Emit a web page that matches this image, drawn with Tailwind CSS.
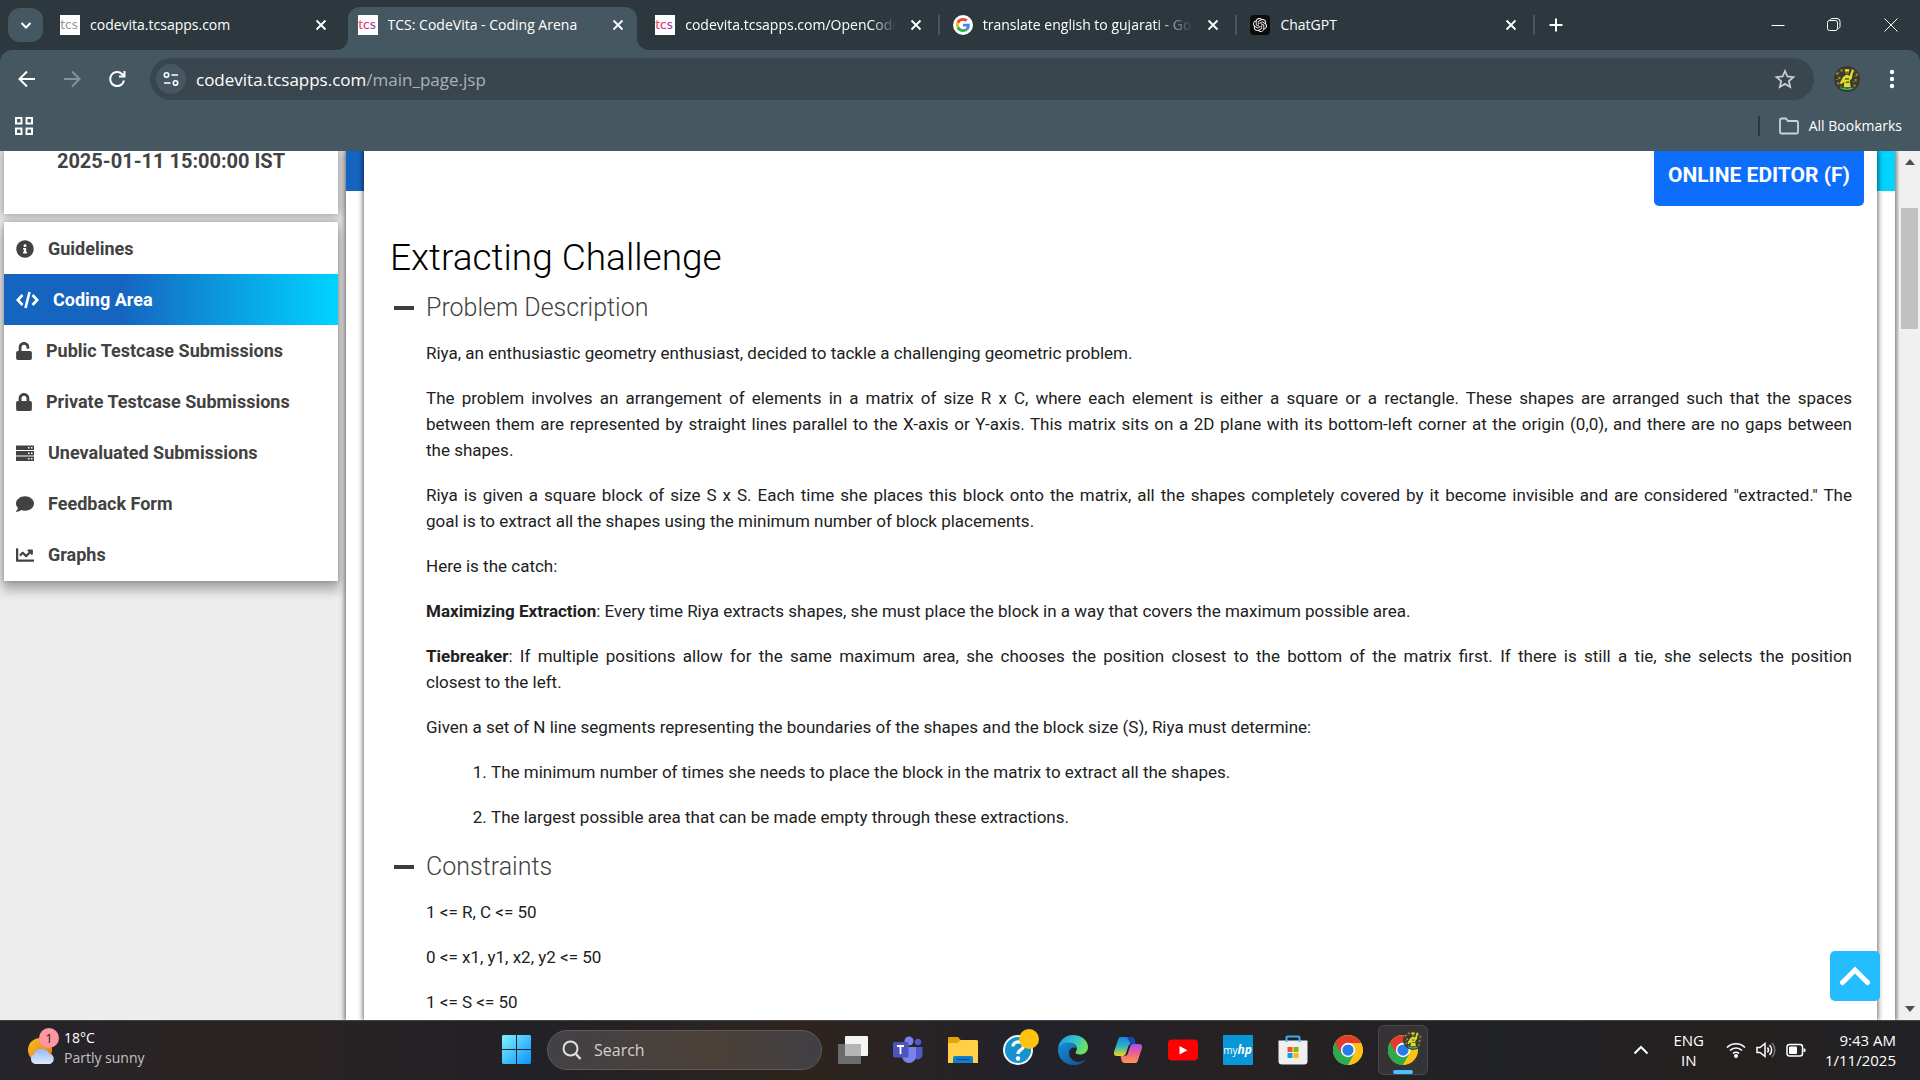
<!DOCTYPE html>
<html lang="en">
<head>
<meta charset="utf-8">
<title>TCS: CodeVita - Coding Arena</title>
<script src="https://cdn.jsdelivr.net/npm/@tailwindcss/browser@4"></script>
</head>
<body class="flex h-screen flex-col overflow-hidden bg-white font-['Roboto',sans-serif] text-[#212121]">
<svg class="absolute h-0 w-0" aria-hidden="true">
  <defs>
    <symbol id="x" viewBox="0 0 20 20"><path d="M5.500 5.500l9 9M14.500 5.500l-9 9" stroke="currentColor" stroke-width="1.800" fill="none"/></symbol>
    <linearGradient id="tcsg" x1="0" y1="0" x2="1" y2="1"><stop offset="0" stop-color="#f59a23"/><stop offset=".5" stop-color="#e0287d"/><stop offset="1" stop-color="#5b3fc4"/></linearGradient>
    <symbol id="chrome" viewBox="0 0 48 48">
      <circle cx="24" cy="24" r="24" fill="#fbc116"/>
      <path d="M24 24L3.200 12A24 24 0 0 0 24 48L34.400 30z" fill="#2da94f"/>
      <path d="M24 13H44.800A24 24 0 0 0 3.200 12L13.600 30z" fill="#e33b2e"/>
      <path d="M24 48A24 24 0 0 0 44.800 13H24L34.400 30z" fill="#fbc116"/>
      <circle cx="24" cy="24" r="11.500" fill="#fff"/><circle cx="24" cy="24" r="9" fill="#2a7bea"/>
    </symbol>
    <symbol id="fan" viewBox="0 0 24 24">
      <circle cx="12" cy="12" r="12" fill="#3a3a2a"/>
      <path d="M2 6h2v2H2zM6 3h2v2H6zM4 10h2v2H4zM17 4h2v2h-2zM20 7h2v2h-2zM19 12h2v2h-2zM3 15h2v2H3zM18 17h2v2h-2z" fill="#a3845a"/>
      <path d="M4 5h1v2H4zM19 9h2v1h-2zM2 12h2v1H2zM17 14h2v1h-2zM6 18h1v2H6z" fill="#5f8a3c"/>
      <path d="M8.500 10l3-2 3 1 2-6 1.500.5-1.500 8-2 2 1 6H9l.5-5-3 2.500-1-1.500z" fill="#e2dc2c"/>
      <circle cx="12" cy="6" r="2" fill="#7b6a35"/><path d="M10 3h4v2h-4z" fill="#f2e530"/>
      <path d="M10 12h4M11 15h3" stroke="#3e6b2b" stroke-width="1.200"/>
      <path d="M5 20h5l2 1 3-1h4a12 12 0 0 1-14 0z" fill="#2fb979"/>
    </symbol>
  </defs>
</svg>

<header class="shrink-0 bg-[#2d383e] font-['Open_Sans',sans-serif] text-white">
  <div class="flex h-[50px] items-stretch">
    <button aria-label="Search tabs" class="mt-2 ml-2 flex h-[34px] w-[35px] items-center justify-center rounded-xl bg-[#455760]">
      <svg class="h-3 w-3" viewBox="0 0 12 12" fill="none" stroke="currentColor" stroke-width="2"><path d="M1.500 4L6 8.500 10.500 4"/></svg>
    </button>
    <div role="tablist" class="ml-[7px] grid w-[1488px] grid-cols-5 text-sm">
      <div role="tab" class="relative flex items-center pr-[17px] pl-2.5">
        <svg class="h-5 w-5 shrink-0 bg-white" viewBox="0 0 20 20"><text x="0" y="14" font-family="Lato" font-size="14" fill="#999">tcs</text></svg>
        <span class="ml-2.5 w-0 flex-1 overflow-hidden whitespace-nowrap">codevita.tcsapps.com</span>
        <button aria-label="Close tab" class="ml-2.5 h-5 w-5"><svg class="h-5 w-5"><use href="#x"/></svg></button>
      </div>
      <div role="tab" aria-selected="true" class="relative pt-[7px] pr-2">
        <svg class="absolute bottom-0 -left-3 h-3 w-3" viewBox="0 0 12 12"><path d="M12 0v12H0A12 12 0 0 0 12 0z" fill="#455760"/></svg>
        <svg class="absolute -right-1 bottom-0 h-3 w-3" viewBox="0 0 12 12"><path d="M0 0v12h12A12 12 0 0 1 0 0z" fill="#455760"/></svg>
        <div class="flex h-full items-center rounded-t-xl bg-[#455760] pr-[9px] pb-[7px] pl-2.5">
          <svg class="h-5 w-5 shrink-0 bg-white" viewBox="0 0 20 20"><text x="0" y="14" font-family="Lato" font-size="14" fill="url(#tcsg)">tcs</text></svg>
          <span class="ml-2.5 w-0 flex-1 overflow-hidden whitespace-nowrap">TCS: CodeVita - Coding Arena</span>
          <button aria-label="Close tab" class="ml-2.5 h-5 w-5"><svg class="h-5 w-5"><use href="#x"/></svg></button>
        </div>
      </div>
      <div role="tab" class="relative flex items-center pr-[17px] pl-2.5">
        <svg class="h-5 w-5 shrink-0 bg-white" viewBox="0 0 20 20"><text x="0" y="14" font-family="Lato" font-size="14" fill="url(#tcsg)">tcs</text></svg>
        <span class="ml-2.5 w-0 flex-1 overflow-hidden whitespace-nowrap [mask-image:linear-gradient(to_right,#000_88%,transparent)]">codevita.tcsapps.com/OpenCodeEditor</span>
        <button aria-label="Close tab" class="ml-2.5 h-5 w-5"><svg class="h-5 w-5"><use href="#x"/></svg></button>
        <span class="absolute top-[15px] right-[3px] h-5 w-0.5 bg-[#455760]"></span>
      </div>
      <div role="tab" class="relative flex items-center pr-[17px] pl-2.5">
        <svg class="h-5 w-5 shrink-0" viewBox="0 0 68 68"><circle cx="34" cy="34" r="34" fill="#fff"/><g transform="translate(10 10)"><path fill="#EA4335" d="M24 9.500c3.540 0 6.710 1.220 9.210 3.600l6.850-6.850C35.900 2.380 30.470 0 24 0 14.620 0 6.510 5.380 2.560 13.220l7.980 6.190C12.430 13.720 17.740 9.500 24 9.500z"/><path fill="#4285F4" d="M46.980 24.550c0-1.570-.15-3.090-.38-4.550H24v9.020h12.940c-.58 2.960-2.260 5.480-4.780 7.180l7.730 6c4.510-4.180 7.090-10.360 7.090-17.650z"/><path fill="#FBBC05" d="M10.530 28.590c-.48-1.450-.76-2.990-.76-4.590s.27-3.140.76-4.590l-7.980-6.190C.92 16.460 0 20.120 0 24c0 3.880.92 7.540 2.560 10.780l7.970-6.190z"/><path fill="#34A853" d="M24 48c6.480 0 11.930-2.130 15.890-5.810l-7.730-6c-2.150 1.450-4.920 2.300-8.160 2.300-6.260 0-11.570-4.220-13.470-9.910l-7.980 6.190C6.510 42.620 14.620 48 24 48z"/></g></svg>
        <span class="ml-2.5 w-0 flex-1 overflow-hidden whitespace-nowrap [mask-image:linear-gradient(to_right,#000_82%,transparent)]">translate english to gujarati - Google Search</span>
        <button aria-label="Close tab" class="ml-2.5 h-5 w-5"><svg class="h-5 w-5"><use href="#x"/></svg></button>
        <span class="absolute top-[15px] right-[3px] h-5 w-0.5 bg-[#455760]"></span>
      </div>
      <div role="tab" class="relative flex items-center pr-[17px] pl-2.5">
        <svg class="h-5 w-5 shrink-0 rounded-sm bg-[#0b0b0b] p-[3px]" viewBox="0 0 24 24" fill="#fff"><path d="M22.2819 9.8211a5.9847 5.9847 0 0 0-.5157-4.9108 6.0462 6.0462 0 0 0-6.5098-2.9A6.0651 6.0651 0 0 0 4.9807 4.1818a5.9847 5.9847 0 0 0-3.9977 2.9 6.0462 6.0462 0 0 0 .7427 7.0966 5.98 5.98 0 0 0 .511 4.9107 6.051 6.051 0 0 0 6.5146 2.9001A5.9847 5.9847 0 0 0 13.2599 24a6.0557 6.0557 0 0 0 5.7718-4.2058 5.9894 5.9894 0 0 0 3.9977-2.9001 6.0557 6.0557 0 0 0-.7475-7.0729zm-9.022 12.6081a4.4755 4.4755 0 0 1-2.8764-1.0408l.1419-.0804 4.7783-2.7582a.7948.7948 0 0 0 .3927-.6813v-6.7369l2.02 1.1686a.071.071 0 0 1 .038.052v5.5826a4.504 4.504 0 0 1-4.4945 4.4944zm-9.6607-4.1254a4.4708 4.4708 0 0 1-.5346-3.0137l.142.0852 4.783 2.7582a.7712.7712 0 0 0 .7806 0l5.8428-3.3685v2.3324a.0804.0804 0 0 1-.0332.0615L9.74 19.9502a4.4992 4.4992 0 0 1-6.1408-1.6464zM2.3408 7.8956a4.485 4.485 0 0 1 2.3655-1.9728V11.6a.7664.7664 0 0 0 .3879.6765l5.8144 3.3543-2.0201 1.1685a.0757.0757 0 0 1-.071 0l-4.8303-2.7865A4.504 4.504 0 0 1 2.3408 7.872zm16.5963 3.8558L13.1038 8.364 15.1192 7.2a.0757.0757 0 0 1 .071 0l4.8303 2.7913a4.4944 4.4944 0 0 1-.6765 8.1042v-5.6772a.79.79 0 0 0-.407-.667zm2.0107-3.0231l-.142-.0852-4.7735-2.7818a.7759.7759 0 0 0-.7854 0L9.409 9.2297V6.8974a.0662.0662 0 0 1 .0284-.0615l4.8303-2.7866a4.4992 4.4992 0 0 1 6.6802 4.66zM8.3065 12.863l-2.02-1.1638a.0804.0804 0 0 1-.038-.0567V6.0742a4.4992 4.4992 0 0 1 7.3757-3.4537l-.142.0805L8.704 5.459a.7948.7948 0 0 0-.3927.6813zm1.0976-2.3654l2.602-1.4998 2.6069 1.4998v2.9994l-2.5974 1.4997-2.6067-1.4997Z"/></svg>
        <span class="ml-2.5 w-0 flex-1 overflow-hidden whitespace-nowrap">ChatGPT</span>
        <button aria-label="Close tab" class="ml-2.5 h-5 w-5"><svg class="h-5 w-5"><use href="#x"/></svg></button>
        <span class="absolute top-[15px] right-[3px] h-5 w-0.5 bg-[#455760]"></span>
      </div>
    </div>
    <button aria-label="New tab" class="ml-1.5 self-center"><svg class="h-6 w-6" viewBox="0 0 24 24" stroke="currentColor" stroke-width="2"><path d="M5.500 12h13M12 5.500v13"/></svg></button>
    <div class="ml-auto flex items-center">
      <button aria-label="Minimize" class="flex w-14 justify-center"><svg class="h-4 w-4" viewBox="0 0 16 16" stroke="currentColor"><path d="M1.500 8.500h13"/></svg></button>
      <button aria-label="Restore" class="flex w-14 justify-center"><svg class="h-4 w-4" viewBox="0 0 16 16" fill="none" stroke="currentColor"><rect x="1.500" y="3.500" width="10" height="10" rx="2"/><path d="M4 3.500C4 2 5 1.500 6 1.500h5a3 3 0 0 1 3 3v5c0 1-1 2-2 2"/></svg></button>
      <button aria-label="Close window" class="flex w-[58px] justify-center"><svg class="h-4 w-4" viewBox="0 0 16 16" stroke="currentColor"><path d="M1.500 1.500l13 13M14.500 1.500l-13 13"/></svg></button>
    </div>
  </div>

  <div class="rounded-t-xl bg-[#455760]">
    <div class="flex h-[58px] items-center pr-4 pl-[15px]">
      <button aria-label="Back"><svg class="h-6 w-6" viewBox="0 0 24 24" fill="none" stroke="currentColor" stroke-width="2"><path d="M20 12H5M12 4.500L4.500 12l7.500 7.500"/></svg></button>
      <button aria-label="Forward" class="ml-[21px] text-[#84929a]"><svg class="h-6 w-6" viewBox="0 0 24 24" fill="none" stroke="currentColor" stroke-width="2"><path d="M4 12h15M12 4.500l7.500 7.500-7.500 7.500"/></svg></button>
      <button aria-label="Reload" class="ml-[21px]"><svg class="h-6 w-6" viewBox="0 0 24 24" fill="none" stroke="currentColor" stroke-width="2"><path d="M19 13.500A7 7 0 1 1 17 7l2.500 2.500M19.500 4v5.500H14"/></svg></button>
      <div class="ml-[21px] flex h-[42px] flex-1 items-center rounded-full bg-[#3a464d] pr-[17px] pl-1.5">
        <button aria-label="Site information" class="flex h-[30px] w-[30px] items-center justify-center rounded-full bg-[#455760]"><svg class="h-4 w-4" viewBox="0 0 16 16" fill="none" stroke="currentColor" stroke-width="1.600"><circle cx="3.500" cy="4" r="2.200"/><path d="M8.500 4H15M1 12h6.500"/><circle cx="12.500" cy="12" r="2.200"/></svg></button>
        <a href="#" class="ml-2.5 flex-1 pt-0.5 text-[17px] leading-6">codevita.tcsapps.com<span class="text-[#aab2b6]">/main_page.jsp</span></a>
        <button aria-label="Bookmark this page" class="text-[#c8cdd0]"><svg class="h-6 w-6" viewBox="0 0 24 24" fill="none" stroke="currentColor" stroke-width="1.800"><path d="M12 4l2.400 5.500 6 .6-4.500 4 1.300 5.900-5.200-3.100L6.800 20l1.300-5.900-4.500-4 6-.6z"/></svg></button>
      </div>
      <button aria-label="Profile" class="ml-5"><svg class="h-[26px] w-[26px]"><use href="#fan"/></svg></button>
      <button aria-label="Chrome menu" class="ml-5"><svg class="h-6 w-6" viewBox="0 0 24 24" fill="currentColor"><circle cx="12" cy="5" r="2.200"/><circle cx="12" cy="12" r="2.200"/><circle cx="12" cy="19" r="2.200"/></svg></button>
    </div>
    <div class="flex h-[43px] items-center pr-[18px] pb-2 pl-[15px]">
      <button aria-label="Apps"><svg class="h-[18px] w-[18px]" viewBox="0 0 18 18" fill="none" stroke="currentColor" stroke-width="2"><path d="M1 1h5.500v5.500H1zM11.500 1H17v5.500h-5.500zM1 11.500h5.500V17H1zM11.500 11.500H17V17h-5.500z"/></svg></button>
      <span class="ml-auto h-5 w-0.5 bg-[#2d383e]"></span>
      <button class="ml-[19px] flex items-center gap-2.5 text-sm"><svg class="h-5 w-5" viewBox="0 0 20 20" fill="none" stroke="#cdd2d5" stroke-width="1.800"><path d="M1 4a1.500 1.500 0 0 1 1.500-1.500H7l2 2.500h8.500A1.500 1.500 0 0 1 19 6.500V16a1.500 1.500 0 0 1-1.500 1.500h-15A1.500 1.500 0 0 1 1 16z"/></svg>All Bookmarks</button>
    </div>
  </div>
</header>

<div class="relative flex min-h-0 flex-1 overflow-hidden bg-[#ededed]">
  <aside class="w-[346px] shrink-0 pr-2 pl-1 text-[#424242]">
    <section class="flex h-[63px] justify-center bg-white text-xl leading-5 font-bold shadow-[0_0_10px_2px_rgba(0,0,0,0.35)]">2025-01-11 15:00:00 IST</section>
    <nav class="mt-2 bg-white py-px text-lg font-bold shadow-[0_8px_10px_2px_rgba(0,0,0,0.25),0_0_6px_rgba(0,0,0,0.3)]">
      <a href="#" class="flex h-[51px] items-center gap-3.5 pl-3"><svg class="h-[18px] w-[18px]" viewBox="0 0 512 512" fill="currentColor"><path d="M256 8C119.043 8 8 119.083 8 256c0 136.997 111.043 248 248 248s248-111.003 248-248C504 119.083 392.957 8 256 8zm0 110c23.196 0 42 18.804 42 42s-18.804 42-42 42-42-18.804-42-42 18.804-42 42-42zm56 254c0 6.627-5.373 12-12 12h-88c-6.627 0-12-5.373-12-12v-24c0-6.627 5.373-12 12-12h12v-64h-12c-6.627 0-12-5.373-12-12v-24c0-6.627 5.373-12 12-12h64c6.627 0 12 5.373 12 12v100h12c6.627 0 12 5.373 12 12v24z"/></svg>Guidelines</a>
      <a href="#" class="flex h-[51px] items-center gap-3.5 bg-[linear-gradient(to_right,#1565c0_35%,#00d4ff)] pl-3 text-white"><svg class="h-[18px] w-[23px]" viewBox="0 0 23 18" fill="none" stroke="currentColor" stroke-width="2.600"><path d="M6.500 4L1.800 9l4.700 5M16.500 4l4.700 5-4.700 5M13.500 1l-4 16"/></svg>Coding Area</a>
      <a href="#" class="flex h-[51px] items-center gap-3.5 pl-3"><svg class="h-[18px] w-4" viewBox="0 0 448 512" fill="currentColor"><path d="M400 256H152V152.900c0-39.600 31.700-72.500 71.300-72.900 40-.4 72.700 32.100 72.700 72v16c0 13.300 10.700 24 24 24h32c13.300 0 24-10.700 24-24v-16C376 68 307.500-.3 223.500 0 139.500.3 72 69.500 72 153.500V256H48c-26.500 0-48 21.500-48 48v160c0 26.500 21.500 48 48 48h352c26.500 0 48-21.500 48-48V304c0-26.500-21.500-48-48-48z"/></svg>Public Testcase Submissions</a>
      <a href="#" class="flex h-[51px] items-center gap-3.5 pl-3"><svg class="h-[18px] w-4" viewBox="0 0 448 512" fill="currentColor"><path d="M400 224h-24v-72C376 68.200 307.800 0 224 0S72 68.200 72 152v72H48c-26.500 0-48 21.500-48 48v192c0 26.500 21.500 48 48 48h352c26.500 0 48-21.500 48-48V272c0-26.500-21.500-48-48-48zm-104 0H152v-72c0-39.700 32.300-72 72-72s72 32.300 72 72v72z"/></svg>Private Testcase Submissions</a>
      <a href="#" class="flex h-[51px] items-center gap-3.5 pl-3"><svg class="h-[18px] w-[18px]" viewBox="0 0 18 18"><path d="M0 1.500h18v4.500H0zM0 7h18v4.500H0zM0 12.500h18V17H0z" fill="currentColor"/><path d="M12 3h1.500v1.500H12zM15 3h1.500v1.500H15zM12 8.500h1.500V10H12zM15 8.500h1.500V10H15zM12 14h1.500v1.500H12zM15 14h1.500v1.500H15z" fill="#fff"/></svg>Unevaluated Submissions</a>
      <a href="#" class="flex h-[51px] items-center gap-3.5 pl-3"><svg class="h-[18px] w-[18px]" viewBox="0 0 512 512" fill="currentColor"><path d="M256 32C114.600 32 0 125.100 0 240c0 49.600 21.400 95 57 130.700C44.500 421.100 2.700 466 2.200 466.500c-2.200 2.300-2.800 5.700-1.500 8.700S4.800 480 8 480c66.300 0 116-31.800 140.600-51.400 32.700 12.300 69 19.400 107.400 19.400 141.400 0 256-93.100 256-208S397.400 32 256 32z"/></svg>Feedback Form</a>
      <a href="#" class="flex h-[51px] items-center gap-3.5 pl-3"><svg class="h-[18px] w-[18px]" viewBox="0 0 512 512" fill="currentColor"><path d="M496 384H64V80c0-8.840-7.160-16-16-16H16C7.160 64 0 71.160 0 80v336c0 17.670 14.330 32 32 32h464c8.840 0 16-7.160 16-16v-32c0-8.840-7.160-16-16-16zM464 96H345.940c-21.380 0-32.090 25.850-16.970 40.970l32.400 32.400L288 242.750l-73.370-73.370c-12.500-12.500-32.760-12.500-45.250 0l-68.690 68.690c-6.250 6.250-6.250 16.380 0 22.630l22.620 22.620c6.250 6.250 16.380 6.250 22.630 0L192 237.250l73.370 73.370c12.500 12.500 32.760 12.500 45.250 0l96-96 32.400 32.400c15.120 15.120 40.970 4.410 40.970-16.970V112c.01-8.840-7.150-16-15.990-16z"/></svg>Graphs</a>
    </nav>
  </aside>

  <main class="min-w-0 flex-1 bg-white bg-[linear-gradient(to_right,#1565c0_35%,#00d4ff)] bg-[length:100%_40px] bg-no-repeat px-[18px] shadow-[0_0_5px_1px_rgba(0,0,0,0.6)]">
    <article class="h-full overflow-hidden bg-white pr-[25px] pl-[26px] shadow-[0_0_5px_1px_rgba(0,0,0,0.6)]">
      <div class="-mr-3 flex justify-end"><button class="h-[55px] rounded-b-[5px] bg-[#0d6efd] px-3.5 pb-1.5 text-[21px] font-bold text-white">ONLINE EDITOR (F)</button></div>
      <h1 class="mt-7 text-[37px] leading-12 font-light text-black">Extracting Challenge</h1>
      <h2 class="mt-2 flex items-center gap-3 pl-1 text-[25px] leading-9 font-light text-[#424242]"><span class="h-1 w-5 bg-[#3d3d3d]"></span>Problem Description</h2>
      <div class="mt-3.5 space-y-[19px] pl-9 text-justify text-[17px] leading-[26px]">
        <p>Riya, an enthusiastic geometry enthusiast, decided to tackle a challenging geometric problem.</p>
        <p>The problem involves an arrangement of elements in a matrix of size R x C, where each element is either a square or a rectangle. These shapes are arranged such that the spaces between&nbsp;them are represented by straight lines parallel to the X-axis or Y-axis. This matrix sits on a 2D plane with its bottom-left corner at the origin (0,0), and there are no gaps between the&nbsp;shapes.</p>
        <p>Riya is given a square block of size S x S. Each time she places this block onto the matrix, all the shapes completely covered by it become invisible and are considered "extracted." The goal&nbsp;is&nbsp;to extract all the shapes using the minimum number of block placements.</p>
        <p>Here is the catch:</p>
        <p><b>Maximizing Extraction</b>: Every time Riya extracts shapes, she must place the block in a way that covers the maximum possible area.</p>
        <p><b>Tiebreaker</b>: If multiple positions allow for the same maximum area, she chooses the position closest to the bottom of the matrix first. If there is still a tie, she selects the position closest&nbsp;to&nbsp;the left.</p>
        <p>Given a set of N line segments representing the boundaries of the shapes and the block size (S), Riya must determine:</p>
        <ol class="list-decimal space-y-[19px] pl-[65px]">
          <li>The minimum number of times she needs to place the block in the matrix to extract all the shapes.</li>
          <li>The largest possible area that can be made empty through these extractions.</li>
        </ol>
      </div>
      <h2 class="mt-[19px] flex items-center gap-3 pl-1 text-[25px] leading-9 font-light text-[#424242]"><span class="h-1 w-5 bg-[#3d3d3d]"></span>Constraints</h2>
      <div class="mt-3.5 space-y-[19px] pl-9 text-[17px] leading-[26px]">
        <p>1 &lt;= R, C &lt;= 50</p>
        <p>0 &lt;= x1, y1, x2, y2 &lt;= 50</p>
        <p>1 &lt;= S &lt;= 50</p>
      </div>
    </article>
  </main>

  <div class="ml-1 flex w-[21px] shrink-0 flex-col items-center bg-[#f0f0f0] py-2">
    <svg class="h-1.5 w-2.5" viewBox="0 0 10 6"><path d="M5 0l5 6H0z" fill="#505050"/></svg>
    <div class="mt-[43px] h-[121px] w-[17px] bg-[#c1c1c1]"></div>
    <svg class="mt-auto h-1.5 w-2.5" viewBox="0 0 10 6"><path d="M0 0h10L5 6z" fill="#505050"/></svg>
  </div>
  <button aria-label="Back to top" class="absolute right-10 bottom-[19px] flex h-[50px] w-[50px] items-center justify-center rounded-[5px] bg-[#24bdff]"><svg class="h-8 w-8" viewBox="0 0 32 32" fill="none" stroke="#fff" stroke-width="5" stroke-linecap="round" stroke-linejoin="miter"><path d="M3.500 22.500L16 10l12.500 12.500"/></svg></button>
</div>

<footer class="relative flex h-15 shrink-0 items-center border-t border-[#454548] bg-[linear-gradient(to_right,#25242a,#2b2322_12%,#222127_28%,#2e241d_42%,#22222b_54%,#272122_64%,#212226_78%,#25201f_90%,#212226)] pb-0.5 font-['Open_Sans',sans-serif] text-white">
  <button class="flex items-center pb-1 pl-[27px] text-left text-sm leading-5">
    <svg class="h-10 w-8" viewBox="0 0 32 40"><defs><linearGradient id="sun" x1="0" y1="0" x2="1" y2="1"><stop stop-color="#f5c02d"/><stop offset="1" stop-color="#f0700e"/></linearGradient><linearGradient id="cl" x1="0" y1="0" x2="0" y2="1"><stop stop-color="#8fb9f5"/><stop offset="1" stop-color="#dfe9fb"/></linearGradient></defs><circle cx="13" cy="22" r="12" fill="url(#sun)"/><path d="M8 36a5 5 0 0 1-1-9.500 8 8 0 0 1 15-1A5.400 5.400 0 0 1 23 36z" fill="url(#cl)"/><circle cx="22" cy="10" r="10" fill="#ff96a0"/><text x="22" y="15" text-anchor="middle" font-size="13" fill="#222">1</text></svg>
    <span class="ml-[5px]">18°C<br><span class="text-[#c2c2c4]">Partly sunny</span></span>
  </button>
  <div class="absolute left-1/2 flex -translate-x-1/2 items-center pl-[12px]">
    <button aria-label="Start" class="mr-4"><svg class="h-[29px] w-[29px]" viewBox="0 0 29 29"><defs><linearGradient id="win" x1="0" y1="0" x2="29" y2="29" gradientUnits="userSpaceOnUse"><stop stop-color="#80f0ff"/><stop offset="1" stop-color="#0a93fb"/></linearGradient></defs><path d="M1 0h13v14H0V1zM15 0h13l1 1v13H15zM0 15h14v14H1l-1-1zM15 15h14v13l-1 1H15z" fill="url(#win)"/></svg></button>
    <label class="mr-[3px] flex h-10 w-[275px] items-center rounded-full border border-[#5c5a5c] bg-[linear-gradient(to_right,#434145,#4b4038_60%,#413f45)] pl-[14px]">
      <svg class="h-5 w-5" viewBox="0 0 20 20" fill="none" stroke="#e0e0e2" stroke-width="2"><circle cx="8.500" cy="8.500" r="7"/><path d="M13.500 13.500L18.500 19" stroke-width="2.400"/></svg>
      <input type="text" aria-label="Search" placeholder="Search" class="ml-3 w-40 bg-transparent text-base text-white placeholder-[#d0cfd1] outline-none">
    </label>
    <button aria-label="Task view" class="flex w-[55px] justify-center"><svg class="h-[30px] w-[30px]" viewBox="0 0 30 30"><rect x="0" y="9" width="23" height="20" rx="1" fill="#6c6c6c"/><rect x="7" y="1" width="23" height="20" rx="1" fill="#f4f4f4"/><path d="M7 9h16v12H8l-1-1z" fill="#b5b5b5"/></svg></button>
    <button aria-label="Teams" class="flex w-[55px] justify-center"><svg class="h-[30px] w-[30px]" viewBox="0 0 30 30"><circle cx="25" cy="7" r="3.200" fill="#5059c9"/><circle cx="16" cy="6" r="4.500" fill="#7b83eb"/><path d="M21 12h8.500v7a5 5 0 0 1-8.500 4z" fill="#5059c9"/><path d="M9 12h14v9a7 7 0 0 1-14 0z" fill="#7b83eb"/><rect x="0" y="7" width="15.500" height="15.500" rx="1.500" fill="#4b53bc"/><path d="M4 11h7M7.500 11v8" stroke="#fff" stroke-width="1.800"/></svg></button>
    <button aria-label="File Explorer" class="flex w-[55px] justify-center"><svg class="h-[30px] w-[30px]" viewBox="0 0 30 30"><path d="M0 3a1 1 0 0 1 1-1h9l3 3.500h16v4H0z" fill="#e0a30a"/><path d="M0 8h9l4-3h16l1 1v22H0z" fill="#ffcf48"/><path d="M5 28v-5a2 2 0 0 1 2-2h16a2 2 0 0 1 2 2v5z" fill="#0f80cf"/><path d="M8.500 24.500h13" stroke="#0a4f91" stroke-width="1.400"/></svg></button>
    <button aria-label="Get help" class="flex w-[55px] justify-center"><svg class="-mt-1.5 -mr-1.5 h-9 w-9" viewBox="0 0 36 36"><circle cx="15" cy="21" r="14" fill="#1593cf" stroke="#f2f7fa" stroke-width="2"/><path d="M10 17.500c0-6 10.500-6 10.500-.5 0 4-5.500 3.500-5.500 8" fill="none" stroke="#fff" stroke-width="3.200"/><circle cx="15" cy="29.500" r="2.200" fill="#fff"/><circle cx="26" cy="10" r="10" fill="#ffc20e"/></svg></button>
    <button aria-label="Edge" class="flex w-[55px] justify-center"><svg class="h-[30px] w-[30px]" viewBox="0 0 30 30"><defs><linearGradient id="e1" x1="0" y1="0" x2="1" y2=".4"><stop offset=".2" stop-color="#1fa7e0"/><stop offset=".6" stop-color="#35c3c5"/><stop offset="1" stop-color="#6be35e"/></linearGradient><linearGradient id="e2" x1="0" y1="0" x2="1" y2="1"><stop stop-color="#1a8fdc"/><stop offset="1" stop-color="#114a8b"/></linearGradient></defs><path d="M0 14A15 15 0 0 1 15 0c9 0 15 6 15 12 0 5-4 7.500-8 7.500-3 0-4.500-1-4.500-2 0-1 1.500-1.500 1.500-4 0-3-3-5.500-7-5.500C6 8 1 11 0 14z" fill="url(#e1)"/><path d="M0 14c1-4 6-7 11-6.500 4 .3 7 2.500 8 6C16 11 11 13 11 18c0 6 6 10 12 8.500 2-.4 4-1.500 5-2.500-2 4-7 6-13 6A15 15 0 0 1 0 14z" fill="url(#e2)"/></svg></button>
    <button aria-label="Copilot" class="flex w-[55px] justify-center"><svg class="h-[30px] w-[30px]" viewBox="0 0 30 30"><defs><linearGradient id="c1" x1="0" y1="0" x2="0" y2="1"><stop stop-color="#1b7fe6"/><stop offset=".5" stop-color="#30b6c0"/><stop offset="1" stop-color="#f2d51f"/></linearGradient><linearGradient id="c2" x1="0" y1="0" x2="0" y2="1"><stop stop-color="#a54df0"/><stop offset=".5" stop-color="#f0608c"/><stop offset="1" stop-color="#fb9a4a"/></linearGradient></defs><path d="M8 2h10c2 0 3 1 3.500 3l1 4h-4c-2 0-3 1-3.500 3l-2 6c-.5 2-1.500 3-3.500 3H4c-2.500 0-3.500-1.500-3-4L5 5c.500-2 1-3 3-3z" fill="url(#c1)"/><path d="M22 28H12c-2 0-3-1-3.500-3l-1-4h4c2 0 3-1 3.500-3l2-6c.5-2 1.500-3 3.500-3H26c2.500 0 3.500 1.500 3 4l-4 12c-.5 2-1 3-3 3z" fill="url(#c2)"/><path d="M14 2h4c2 0 3 1 3.500 3l1 4h-5z" fill="#1747b5"/></svg></button>
    <button aria-label="YouTube" class="flex w-[55px] justify-center"><svg class="h-[30px] w-[30px]" viewBox="0 0 30 30"><rect y="4.500" width="30" height="21" rx="4" fill="#f00"/><path d="M11.500 11v8.500l8-4.200z" fill="#fff"/></svg></button>
    <button aria-label="myHP" class="flex w-[55px] justify-center"><span class="flex h-[30px] w-[30px] items-center justify-center rounded-[1px] bg-[#0796d7] text-[10px] leading-none">my<b class="text-[12px] italic">hp</b></span></button>
    <button aria-label="Microsoft Store" class="flex w-[55px] justify-center"><svg class="h-[30px] w-[30px]" viewBox="0 0 30 30"><path d="M8.500 7V2.500a1 1 0 0 1 1-1h11a1 1 0 0 1 1 1V7" fill="none" stroke="#2bb5ea" stroke-width="2"/><path d="M.5 5.500h29V26a3.500 3.500 0 0 1-3.500 3.500H4A3.500 3.500 0 0 1 .5 26z" fill="#efefef"/><path d="M8.500 5.500v1.500M21.500 5.500v1.500" stroke="#2bb5ea" stroke-width="2"/><path d="M9.500 12h5v5h-5z" fill="#f25022"/><path d="M15.500 12h5v5h-5z" fill="#7fba00"/><path d="M9.500 18h5v5h-5z" fill="#00a4ef"/><path d="M15.500 18h5v5h-5z" fill="#ffb900"/></svg></button>
    <button aria-label="Chrome" class="flex w-[55px] justify-center"><svg class="h-[30px] w-[30px]"><use href="#chrome"/></svg></button>
    <button aria-label="Chrome, running" class="relative mr-0.5 ml-[3px] flex h-[50px] w-[50px] items-center justify-center rounded-md border border-white/10 bg-white/8"><svg class="h-[30px] w-[30px]"><use href="#chrome"/></svg><svg class="absolute top-1 right-1 h-5 w-5"><use href="#fan"/></svg><span class="absolute bottom-0 h-1 w-5 rounded-full bg-[#4cc2ff]"></span></button>
  </div>
  <div class="ml-auto flex items-center pr-6 text-[15px] leading-5">
    <button aria-label="Show hidden icons"><svg class="h-4 w-4" viewBox="0 0 16 16" fill="none" stroke="currentColor" stroke-width="2"><path d="M1.500 11.500L8 5l6.500 6.500"/></svg></button>
    <button class="ml-6 text-center">ENG<br>IN</button>
    <svg class="ml-[22px] h-5 w-5" viewBox="0 0 20 20" fill="none" stroke="currentColor" stroke-width="1.700"><path d="M1 7.500a12.700 12.700 0 0 1 18 0M4 10.500a8.500 8.500 0 0 1 12 0M7 13.500a4.300 4.300 0 0 1 6 0"/><circle cx="10" cy="16" r="1.200" fill="currentColor"/></svg>
    <svg class="ml-2.5 h-5 w-5" viewBox="0 0 20 20" fill="none" stroke="currentColor" stroke-width="1.500"><path d="M1 7.500h3L9 3.500v13l-5-4H1zM11.500 7.500a4 4 0 0 1 0 5M13.500 5a7 7 0 0 1 0 10"/><path d="M16 3a10 10 0 0 1 0 14" stroke="#77777a"/></svg>
    <svg class="ml-2.5 h-5 w-5" viewBox="0 0 20 20"><rect x="1" y="4.500" width="15.500" height="11.500" rx="2.500" fill="none" stroke="#fff" stroke-width="1.500"/><rect x="3" y="6.500" width="8" height="7.500" rx="1" fill="#fff"/><path d="M17.500 8.500h1a1 1 0 0 1 1 1v1.500a1 1 0 0 1-1 1h-1z" fill="#fff"/></svg>
    <button class="ml-[19px] text-right">9:43 AM<br>1/11/2025</button>
  </div>
</footer>
</body>
</html>
